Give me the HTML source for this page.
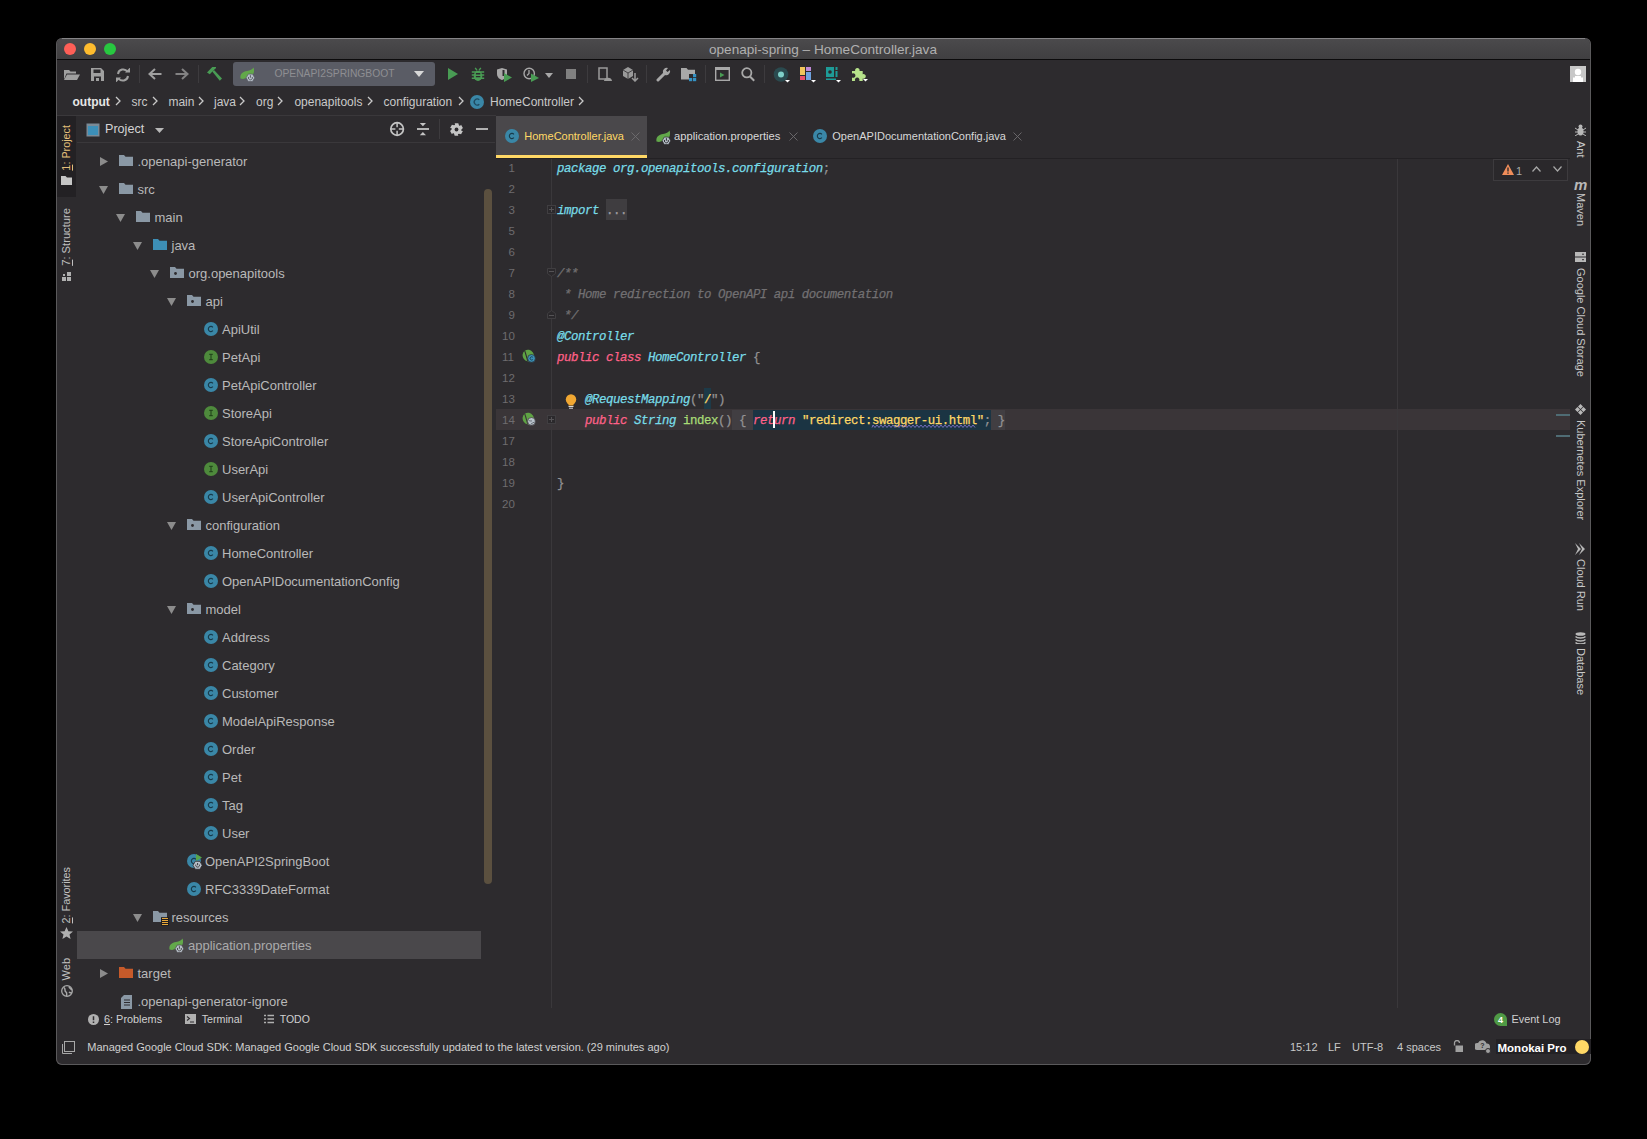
<!DOCTYPE html><html><head><meta charset="utf-8"><style>
html,body{margin:0;padding:0;background:#000;width:1647px;height:1139px;overflow:hidden}
.t{position:absolute;white-space:pre;line-height:1;}
.b{position:absolute;}
#win{position:absolute;left:56px;top:38px;width:1535px;height:1027px;border-radius:6px;background:#2d2b2e;overflow:hidden;box-shadow:0 0 0 1px #5a595b inset}
</style></head><body>
<div id="win"></div>

<div class="b" style="left:57px;top:39px;width:1533px;height:20px;background:linear-gradient(#4b4a4c,#403f41);border-radius:5px 5px 0 0"></div>
<div class="b" style="left:62px;top:38px;width:1523px;height:1px;background:#858486;"></div>
<div class="b" style="left:57px;top:59px;width:1533px;height:1px;background:#0c0b0c;"></div>
<div class="b" style="left:64px;top:43px;width:12px;height:12px;border-radius:50%;background:#fe5f57"></div>
<div class="b" style="left:84px;top:43px;width:12px;height:12px;border-radius:50%;background:#febc2e"></div>
<div class="b" style="left:104px;top:43px;width:12px;height:12px;border-radius:50%;background:#28c840"></div>
<div class="t" style="left:709px;top:43.00px;font-size:13.58px;color:#b0b0b0;font-weight:normal;font-style:normal;font-family:'Liberation Sans', sans-serif;">openapi-spring – HomeController.java</div>
<svg class="b" style="left:64px;top:69px" width="16" height="11" viewBox="0 0 16 11"><path d="M0 1 h5 l1.5 1.5 h5.5 v2 h-9.5 l-2.5 6z" fill="#a0a0a0"/><path d="M3 5.5 h13 l-3 5.5 h-13z" fill="#a0a0a0"/></svg>
<svg class="b" style="left:91px;top:68px" width="13" height="13" viewBox="0 0 13 13"><path d="M0 0h10l3 3v10h-13z M2.5 1.5v3.5h7v-3.5z M3 8.5v4.5h7v-4.5z" fill="#a0a0a0" fill-rule="evenodd"/><rect x="5" y="10" width="3" height="3" fill="#a0a0a0"/></svg>
<svg class="b" style="left:116px;top:68px" width="14" height="14" viewBox="0 0 14 14"><path d="M2 6 A5.2 5.2 0 0 1 11.5 3.8" stroke="#a0a0a0" stroke-width="2" fill="none"/><path d="M12 8 A5.2 5.2 0 0 1 2.5 10.2" stroke="#a0a0a0" stroke-width="2" fill="none"/><path d="M9 4.5h5v-5z" fill="#a0a0a0"/><path d="M5 9.5h-5v5z" fill="#a0a0a0"/></svg>
<div class="b" style="left:139px;top:65px;width:1px;height:18px;background:#3d3b3e;"></div>
<svg class="b" style="left:148px;top:68px" width="14" height="12" viewBox="0 0 14 12"><path d="M13.5 6H2 M7 1L1.5 6 7 11" stroke="#a0a0a0" stroke-width="2" fill="none"/></svg>
<svg class="b" style="left:175px;top:68px" width="14" height="12" viewBox="0 0 14 12"><path d="M0.5 6H12 M7 1l5.5 5-5.5 5" stroke="#a0a0a0" stroke-width="2" fill="none" opacity="0.75"/></svg>
<div class="b" style="left:198px;top:65px;width:1px;height:18px;background:#3d3b3e;"></div>
<svg class="b" style="left:200px;top:60px" width="24" height="24" viewBox="0 0 24 24"><path d="M7 12.5 L12.3 7 L15.9 7 L16.1 7.9 L13.6 10.2 L9.8 14.2z" fill="#499c54"/><path d="M12.3 11.5 L14 10 L22 18.5 L19.8 20.8z" fill="#499c54"/></svg>
<div class="b" style="left:233px;top:62px;width:202px;height:24px;background:#5a5c65;border-radius:3px"></div>
<svg class="b" style="left:239px;top:67.0px" width="16" height="16" viewBox="0 0 16 16"><path d="M1.5 11.5 C0.5 7 4 4.5 8 4 C11 3.6 13.5 2.5 14.5 0.5 C15.5 3 15.5 7 12 9.5 L4 12z" fill="#62a84a"/><polygon points="15.70,10.80 13.55,14.52 9.25,14.52 7.10,10.80 9.25,7.08 13.55,7.08" fill="#b6bfc8" stroke="#5a5c65" stroke-width="0.7"/><path d="M9.6 10 A2 2 0 1 0 13.2 10" stroke="#5a5c65" stroke-width="1" fill="none"/><path d="M11.4 8.2v2.5" stroke="#5a5c65" stroke-width="1"/></svg>
<div class="t" style="left:274.4px;top:69.28px;font-size:10.3px;color:#8e8e92;font-weight:normal;font-style:normal;font-family:'Liberation Sans', sans-serif;">OPENAPI2SPRINGBOOT</div>
<svg class="b" style="left:414px;top:71px" width="10" height="6" viewBox="0 0 10 6"><path d="M0 0h10l-5 6z" fill="#d8d8d8"/></svg>
<svg class="b" style="left:448px;top:68px" width="10" height="12" viewBox="0 0 10 12"><path d="M0 0 L10 6 L0 12z" fill="#499c54"/></svg>
<svg class="b" style="left:471px;top:66px" width="14" height="16" viewBox="0 0 14 16"><ellipse cx="7" cy="9.9" rx="4.3" ry="5.1" fill="#499c54"/><path d="M0.8 6h12.4M0.8 8.9h12.4M0.8 12.3h12.4" stroke="#499c54" stroke-width="1.5"/><path d="M4.2 1.8l1.8 2.6M9.8 1.8l-1.8 2.6" stroke="#499c54" stroke-width="1.4"/><path d="M4.9 7.7h4.4M4.9 10.6h4.4" stroke="#2d2b2e" stroke-width="1.4"/></svg>
<svg class="b" style="left:497px;top:68px" width="15" height="14" viewBox="0 0 15 14"><path d="M0 1.5 L5 0 L10 1.5 V6 C10 9.5 7 11.5 5 12 C3 11.5 0 9.5 0 6z" fill="#a8a8a8"/><path d="M5.5 2 h2 v6 h-2z" fill="#2d2b2e"/><path d="M7 5 L15 9.5 L7 14z" fill="#499c54"/></svg>
<svg class="b" style="left:523px;top:67px" width="16" height="15" viewBox="0 0 16 15"><circle cx="6.2" cy="6.5" r="5.2" stroke="#a8a8a8" stroke-width="1.4" fill="none"/><path d="M6 3v3.5l-2 2" stroke="#a8a8a8" stroke-width="1.3" fill="none"/><path d="M8 6.5 L16 11 L8 15z" fill="#499c54"/></svg>
<svg class="b" style="left:545px;top:73px" width="8" height="5" viewBox="0 0 8 5"><path d="M0 0h8l-4 5z" fill="#a8a8a8"/></svg>
<div class="b" style="left:566px;top:69px;width:10px;height:10px;background:#808080;"></div>
<div class="b" style="left:587px;top:65px;width:1px;height:18px;background:#3d3b3e;"></div>
<svg class="b" style="left:598px;top:67px" width="14" height="15" viewBox="0 0 14 15"><path d="M1 1h8v11h-8z" stroke="#9a9a9a" stroke-width="1.5" fill="none"/><path d="M6 14 C6 9.5 14 9.5 14 14z" fill="#9a9a9a"/></svg>
<svg class="b" style="left:623px;top:67px" width="16" height="15" viewBox="0 0 16 15"><path d="M0 3l5-3 5 3v6l-5 3-5-3z" fill="#9a9a9a"/><path d="M0 3l5 3 5-3M5 6v6" stroke="#2d2b2e" stroke-width="0.8" fill="none"/><path d="M12 6v8M9 11l3 3 3-3" stroke="#9a9a9a" stroke-width="1.5" fill="none"/></svg>
<div class="b" style="left:646px;top:65px;width:1px;height:18px;background:#3d3b3e;"></div>
<svg class="b" style="left:656px;top:67px" width="15" height="15" viewBox="0 0 15 15"><path d="M2 13 L8 7" stroke="#a8a8a8" stroke-width="3" stroke-linecap="round"/><path d="M7 6 A4 4 0 0 1 12 1 L10 3.5 L11.5 5 L14 3 A4 4 0 0 1 9 8z" fill="#a8a8a8"/></svg>
<svg class="b" style="left:681px;top:67px" width="16" height="15" viewBox="0 0 16 15"><path d="M0 1h5.5l1.5 1.8h7v4.2h-6v5.5h-8z" fill="#a8a8a8"/><rect x="12" y="7" width="3.2" height="3.2" fill="#3592c4"/><rect x="8" y="11" width="3.2" height="3.2" fill="#3592c4"/><rect x="12" y="11" width="3.2" height="3.2" fill="#3592c4"/></svg>
<div class="b" style="left:705px;top:65px;width:1px;height:18px;background:#3d3b3e;"></div>
<svg class="b" style="left:715px;top:67px" width="15" height="14" viewBox="0 0 15 14"><rect x="0.7" y="0.7" width="13.6" height="12.6" stroke="#a8a8a8" stroke-width="1.4" fill="none"/><rect x="0.7" y="0.7" width="13.6" height="2.3" fill="#a8a8a8"/><path d="M5 5.5 L9.5 8 L5 10.5z" fill="#499c54"/></svg>
<svg class="b" style="left:741px;top:67px" width="14" height="15" viewBox="0 0 14 15"><circle cx="5.8" cy="5.8" r="4.6" stroke="#a8a8a8" stroke-width="1.8" fill="none"/><path d="M9 9.5 L13.2 13.8" stroke="#a8a8a8" stroke-width="2"/></svg>
<div class="b" style="left:764px;top:65px;width:1px;height:18px;background:#3d3b3e;"></div>
<svg class="b" style="left:773px;top:67px" width="18" height="16" viewBox="0 0 18 16"><circle cx="8" cy="7.5" r="7.3" fill="#2a4a4f"/><circle cx="8" cy="7.5" r="3" fill="#7fd0c9"/><path d="M12 13h5l-2.5 2.5z" fill="#fff"/></svg>
<svg class="b" style="left:800px;top:67px" width="17" height="16" viewBox="0 0 17 16"><rect x="0" y="0" width="5" height="8" fill="#f1c55c"/><rect x="6" y="0" width="5" height="4" fill="#c08ad8"/><rect x="0" y="9" width="5" height="4" fill="#e84f6b"/><rect x="6" y="5" width="5" height="8" fill="#6fa3e0"/><path d="M11 13h5l-2.5 2.5z" fill="#fff"/></svg>
<svg class="b" style="left:826px;top:67px" width="17" height="16" viewBox="0 0 17 16"><rect x="0" y="0" width="8" height="10" fill="#1e9c98"/><circle cx="4" cy="5" r="1.8" fill="#2d2b2e"/><rect x="9.5" y="0" width="2" height="3" fill="#1e9c98"/><rect x="9.5" y="4" width="2" height="6" fill="#1e9c98"/><rect x="0" y="11.5" width="10" height="1.5" fill="#1e9c98"/><path d="M10 13h5l-2.5 2.5z" fill="#fff"/></svg>
<svg class="b" style="left:851px;top:66px" width="18" height="17" viewBox="0 0 18 17"><path d="M1 5h3.2a2.3 2.3 0 1 1 4.3 0h3.2v3.2a2.3 2.3 0 1 1 0 4.3v2.5h-3.5a2.3 2.3 0 1 0-4 0h-3.2v-3.5a2.3 2.3 0 1 0 0-4z" fill="#b6e28a"/><path d="M12 13h5l-2.5 2.5z" fill="#fff"/></svg>
<div class="b" style="left:1570px;top:66px;width:16px;height:16px;background:#c8c8c8;"></div>
<svg class="b" style="left:1570px;top:66px" width="16" height="16" viewBox="0 0 16 16"><circle cx="8" cy="6" r="3.2" fill="#fff"/><path d="M3 16 V11.5 H5 V10 H11 V11.5 H13 V16z" fill="#fff"/></svg>
<div class="t" style="left:72.5px;top:95.84px;font-size:12px;color:#e6e6e6;font-weight:bold;font-style:normal;font-family:'Liberation Sans', sans-serif;">output</div>
<svg class="b" style="left:115px;top:96px" width="6" height="10" viewBox="0 0 6 10"><path d="M1 1 L5 5 L1 9" stroke="#c9c9c9" stroke-width="1.3" fill="none"/></svg>
<div class="t" style="left:131.4px;top:95.84px;font-size:12px;color:#c9c9c9;font-weight:normal;font-style:normal;font-family:'Liberation Sans', sans-serif;">src</div>
<svg class="b" style="left:152px;top:96px" width="6" height="10" viewBox="0 0 6 10"><path d="M1 1 L5 5 L1 9" stroke="#c9c9c9" stroke-width="1.3" fill="none"/></svg>
<div class="t" style="left:168.4px;top:95.84px;font-size:12px;color:#c9c9c9;font-weight:normal;font-style:normal;font-family:'Liberation Sans', sans-serif;">main</div>
<svg class="b" style="left:198px;top:96px" width="6" height="10" viewBox="0 0 6 10"><path d="M1 1 L5 5 L1 9" stroke="#c9c9c9" stroke-width="1.3" fill="none"/></svg>
<div class="t" style="left:214px;top:95.84px;font-size:12px;color:#c9c9c9;font-weight:normal;font-style:normal;font-family:'Liberation Sans', sans-serif;">java</div>
<svg class="b" style="left:239px;top:96px" width="6" height="10" viewBox="0 0 6 10"><path d="M1 1 L5 5 L1 9" stroke="#c9c9c9" stroke-width="1.3" fill="none"/></svg>
<div class="t" style="left:256px;top:95.84px;font-size:12px;color:#c9c9c9;font-weight:normal;font-style:normal;font-family:'Liberation Sans', sans-serif;">org</div>
<svg class="b" style="left:277px;top:96px" width="6" height="10" viewBox="0 0 6 10"><path d="M1 1 L5 5 L1 9" stroke="#c9c9c9" stroke-width="1.3" fill="none"/></svg>
<div class="t" style="left:294.4px;top:95.84px;font-size:12px;color:#c9c9c9;font-weight:normal;font-style:normal;font-family:'Liberation Sans', sans-serif;">openapitools</div>
<svg class="b" style="left:367px;top:96px" width="6" height="10" viewBox="0 0 6 10"><path d="M1 1 L5 5 L1 9" stroke="#c9c9c9" stroke-width="1.3" fill="none"/></svg>
<div class="t" style="left:383.5px;top:95.84px;font-size:12px;color:#c9c9c9;font-weight:normal;font-style:normal;font-family:'Liberation Sans', sans-serif;">configuration</div>
<svg class="b" style="left:458px;top:96px" width="6" height="10" viewBox="0 0 6 10"><path d="M1 1 L5 5 L1 9" stroke="#c9c9c9" stroke-width="1.3" fill="none"/></svg>
<div class="b" style="left:470px;top:95px;width:14px;height:14px;border-radius:50%;background:#3a87a7"></div>
<svg class="b" style="left:470px;top:95px" width="14" height="14" viewBox="0 0 14 14"><path d="M9.3 4.8 A3 3 0 1 0 9.3 9.2" stroke="#1f4a60" stroke-width="1.3" fill="none"/></svg>
<div class="t" style="left:490px;top:95.84px;font-size:12px;color:#c9c9c9;font-weight:normal;font-style:normal;font-family:'Liberation Sans', sans-serif;">HomeController</div>
<svg class="b" style="left:578px;top:96px" width="6" height="10" viewBox="0 0 6 10"><path d="M1 1 L5 5 L1 9" stroke="#c9c9c9" stroke-width="1.3" fill="none"/></svg>
<div class="b" style="left:57px;top:115px;width:439px;height:1px;background:#3a383b;"></div>
<div class="b" style="left:57px;top:116px;width:19px;height:81px;background:#232124;"></div>
<div class="t" style="left:61px;top:125px;font-size:10.8px;line-height:10.8px;color:#e5c07b;font-family:'Liberation Sans', sans-serif;writing-mode:vertical-rl;transform:rotate(180deg);"><u>1</u>: Project</div>
<svg class="b" style="left:61px;top:176px" width="11" height="9" viewBox="0 0 11 9"><path d="M0 0h4.5l1.5 1.5h5v7.5h-11z" fill="#c6c6c6"/></svg>
<div class="t" style="left:61px;top:208px;font-size:11.2px;line-height:11.2px;color:#c0c0c0;font-family:'Liberation Sans', sans-serif;writing-mode:vertical-rl;transform:rotate(180deg);"><u>7</u>: Structure</div>
<svg class="b" style="left:62px;top:272px" width="10" height="10" viewBox="0 0 10 10"><rect x="0" y="5" width="4" height="4" fill="#b0b0b0"/><rect x="5" y="5" width="4" height="4" fill="#b0b0b0"/><rect x="5" y="0" width="4" height="4" fill="#b0b0b0"/><rect x="1" y="2" width="2" height="2" fill="#b0b0b0"/></svg>
<div class="t" style="left:61px;top:866.5px;font-size:10.8px;line-height:10.8px;color:#c0c0c0;font-family:'Liberation Sans', sans-serif;writing-mode:vertical-rl;transform:rotate(180deg);"><u>2</u>: Favorites</div>
<svg class="b" style="left:60px;top:927px" width="13" height="12" viewBox="0 0 13 12"><path d="M6.5 0 L8.4 4.2 L13 4.6 L9.5 7.6 L10.6 12 L6.5 9.6 L2.4 12 L3.5 7.6 L0 4.6 L4.6 4.2z" fill="#b0b0b0"/></svg>
<div class="t" style="left:61px;top:958px;font-size:11px;line-height:11px;color:#c0c0c0;font-family:'Liberation Sans', sans-serif;writing-mode:vertical-rl;transform:rotate(180deg);">Web</div>
<svg class="b" style="left:61px;top:985px" width="12" height="12" viewBox="0 0 12 12"><circle cx="6" cy="6" r="5.3" stroke="#a8a8a8" stroke-width="1.3" fill="none"/><path d="M3 2.5 C5 4 3 6 5 7 C6.5 8 5 10 6 11 M8 1.5 C8 3 10 4 11 5 M8 7 C9 8 10 8 11 8" stroke="#a8a8a8" stroke-width="1.5" fill="none"/></svg>
<svg class="b" style="left:86px;top:123px" width="14" height="14" viewBox="0 0 14 14"><rect x="0.5" y="0.5" width="13" height="13" fill="#7a8a96"/><rect x="2" y="3" width="10" height="9" fill="#3c8fb8"/></svg>
<div class="t" style="left:105px;top:123.33px;font-size:12.6px;color:#d4d4d4;font-weight:normal;font-style:normal;font-family:'Liberation Sans', sans-serif;">Project</div>
<svg class="b" style="left:154.5px;top:128px" width="9" height="5" viewBox="0 0 9 5"><path d="M0 0h9l-4.5 5z" fill="#b8b8b8"/></svg>
<svg class="b" style="left:389px;top:121px" width="16" height="16" viewBox="0 0 16 16"><circle cx="8.1" cy="8" r="6.3" stroke="#c4c4c4" stroke-width="1.7" fill="none"/><path d="M8.1 2v4.3M8.1 9.7V14M2 8h4.4M9.8 8h4.4" stroke="#c4c4c4" stroke-width="1.5"/></svg>
<svg class="b" style="left:416px;top:121px" width="14" height="16" viewBox="0 0 14 16"><path d="M1 8h12" stroke="#c4c4c4" stroke-width="1.8"/><path d="M3.8 2h6.2l-3.1 3.2z M3.8 14.3h6.2l-3.1-3.2z" fill="#c4c4c4"/></svg>
<div class="b" style="left:439px;top:119px;width:1px;height:20px;background:#3d3b3e;"></div>
<svg class="b" style="left:448.5px;top:121.5px" width="15" height="15" viewBox="0 0 15 15"><polygon points="5.68,1.16 9.32,1.16 9.95,3.26 10.90,3.98 12.08,2.75 13.90,5.90 12.40,7.50 12.25,8.69 13.90,9.10 12.08,12.25 9.95,11.74 8.85,12.21 9.32,13.84 5.68,13.84 5.05,11.74 4.10,11.02 2.92,12.25 1.10,9.10 2.60,7.50 2.75,6.31 1.10,5.90 2.92,2.75 5.05,3.26 6.15,2.79" fill="#c4c4c4"/><circle cx="7.5" cy="7.5" r="3.6" fill="#c4c4c4"/><circle cx="7.5" cy="7.5" r="1.9" fill="#2d2b2e"/></svg>
<div class="b" style="left:476px;top:128px;width:12px;height:2px;background:#b0b0b0;"></div>
<div class="b" style="left:77px;top:142px;width:418px;height:1px;background:#3a383b;"></div>
<div class="b" style="left:77px;top:931px;width:404px;height:28px;background:#4a484b;"></div>
<svg class="b" style="left:100px;top:157.0px" width="8" height="9" viewBox="0 0 8 9"><path d="M0 0 L8 4.5 L0 9z" fill="#8c8c8c"/></svg>
<svg class="b" style="left:119px;top:155.0px" width="16" height="15" viewBox="0 0 16 15"><path d="M0 0h5l1.5 1.8h7.5v9.2h-14z" fill="#8a98a5"/></svg>
<div class="t" style="left:137.5px;top:155.00px;font-size:13px;color:#b9b9b9;font-weight:normal;font-style:normal;font-family:'Liberation Sans', sans-serif;">.openapi-generator</div>
<svg class="b" style="left:99px;top:186.0px" width="9" height="8" viewBox="0 0 9 8"><path d="M0 0 H9 L4.5 8z" fill="#8c8c8c"/></svg>
<svg class="b" style="left:119px;top:183.0px" width="16" height="15" viewBox="0 0 16 15"><path d="M0 0h5l1.5 1.8h7.5v9.2h-14z" fill="#8a98a5"/></svg>
<div class="t" style="left:137.5px;top:183.00px;font-size:13px;color:#b9b9b9;font-weight:normal;font-style:normal;font-family:'Liberation Sans', sans-serif;">src</div>
<svg class="b" style="left:116px;top:214.0px" width="9" height="8" viewBox="0 0 9 8"><path d="M0 0 H9 L4.5 8z" fill="#8c8c8c"/></svg>
<svg class="b" style="left:136px;top:211.0px" width="16" height="15" viewBox="0 0 16 15"><path d="M0 0h5l1.5 1.8h7.5v9.2h-14z" fill="#8a98a5"/></svg>
<div class="t" style="left:154.5px;top:211.00px;font-size:13px;color:#b9b9b9;font-weight:normal;font-style:normal;font-family:'Liberation Sans', sans-serif;">main</div>
<svg class="b" style="left:133px;top:242.0px" width="9" height="8" viewBox="0 0 9 8"><path d="M0 0 H9 L4.5 8z" fill="#8c8c8c"/></svg>
<svg class="b" style="left:153px;top:239.0px" width="16" height="15" viewBox="0 0 16 15"><path d="M0 0h5l1.5 1.8h7.5v9.2h-14z" fill="#3d8fb6"/></svg>
<div class="t" style="left:171.5px;top:239.00px;font-size:13px;color:#b9b9b9;font-weight:normal;font-style:normal;font-family:'Liberation Sans', sans-serif;">java</div>
<svg class="b" style="left:150px;top:270.0px" width="9" height="8" viewBox="0 0 9 8"><path d="M0 0 H9 L4.5 8z" fill="#8c8c8c"/></svg>
<svg class="b" style="left:170px;top:267.0px" width="16" height="15" viewBox="0 0 16 15"><path d="M0 0h5l1.5 1.8h7.5v9.2h-14z" fill="#8a98a5"/><circle cx="5.5" cy="6.5" r="1.4" fill="#2d2b2e"/></svg>
<div class="t" style="left:188.5px;top:267.00px;font-size:13px;color:#b9b9b9;font-weight:normal;font-style:normal;font-family:'Liberation Sans', sans-serif;">org.openapitools</div>
<svg class="b" style="left:167px;top:298.0px" width="9" height="8" viewBox="0 0 9 8"><path d="M0 0 H9 L4.5 8z" fill="#8c8c8c"/></svg>
<svg class="b" style="left:187px;top:295.0px" width="16" height="15" viewBox="0 0 16 15"><path d="M0 0h5l1.5 1.8h7.5v9.2h-14z" fill="#8a98a5"/><circle cx="5.5" cy="6.5" r="1.4" fill="#2d2b2e"/></svg>
<div class="t" style="left:205.5px;top:295.00px;font-size:13px;color:#b9b9b9;font-weight:normal;font-style:normal;font-family:'Liberation Sans', sans-serif;">api</div>
<div class="b" style="left:204px;top:321.7px;width:14px;height:14px;border-radius:50%;background:#3a87a7"></div>
<svg class="b" style="left:204px;top:321.7px" width="14" height="14" viewBox="0 0 14 14"><path d="M8.9 5.3 A2.6 2.6 0 1 0 8.9 8.7" stroke="#173a4a" stroke-width="1.1" fill="none"/></svg>
<div class="t" style="left:222px;top:323.00px;font-size:13px;color:#b9b9b9;font-weight:normal;font-style:normal;font-family:'Liberation Sans', sans-serif;">ApiUtil</div>
<div class="b" style="left:204px;top:349.7px;width:14px;height:14px;border-radius:50%;background:#4e8a3c"></div>
<svg class="b" style="left:204px;top:349.7px" width="14" height="14" viewBox="0 0 14 14"><path d="M5.2 4.3h3.6M7 4.3v5.4M5.2 9.7h3.6" stroke="#1d3d17" stroke-width="1" fill="none"/></svg>
<div class="t" style="left:222px;top:351.00px;font-size:13px;color:#b9b9b9;font-weight:normal;font-style:normal;font-family:'Liberation Sans', sans-serif;">PetApi</div>
<div class="b" style="left:204px;top:377.7px;width:14px;height:14px;border-radius:50%;background:#3a87a7"></div>
<svg class="b" style="left:204px;top:377.7px" width="14" height="14" viewBox="0 0 14 14"><path d="M8.9 5.3 A2.6 2.6 0 1 0 8.9 8.7" stroke="#173a4a" stroke-width="1.1" fill="none"/></svg>
<div class="t" style="left:222px;top:379.00px;font-size:13px;color:#b9b9b9;font-weight:normal;font-style:normal;font-family:'Liberation Sans', sans-serif;">PetApiController</div>
<div class="b" style="left:204px;top:405.7px;width:14px;height:14px;border-radius:50%;background:#4e8a3c"></div>
<svg class="b" style="left:204px;top:405.7px" width="14" height="14" viewBox="0 0 14 14"><path d="M5.2 4.3h3.6M7 4.3v5.4M5.2 9.7h3.6" stroke="#1d3d17" stroke-width="1" fill="none"/></svg>
<div class="t" style="left:222px;top:407.00px;font-size:13px;color:#b9b9b9;font-weight:normal;font-style:normal;font-family:'Liberation Sans', sans-serif;">StoreApi</div>
<div class="b" style="left:204px;top:433.7px;width:14px;height:14px;border-radius:50%;background:#3a87a7"></div>
<svg class="b" style="left:204px;top:433.7px" width="14" height="14" viewBox="0 0 14 14"><path d="M8.9 5.3 A2.6 2.6 0 1 0 8.9 8.7" stroke="#173a4a" stroke-width="1.1" fill="none"/></svg>
<div class="t" style="left:222px;top:435.00px;font-size:13px;color:#b9b9b9;font-weight:normal;font-style:normal;font-family:'Liberation Sans', sans-serif;">StoreApiController</div>
<div class="b" style="left:204px;top:461.7px;width:14px;height:14px;border-radius:50%;background:#4e8a3c"></div>
<svg class="b" style="left:204px;top:461.7px" width="14" height="14" viewBox="0 0 14 14"><path d="M5.2 4.3h3.6M7 4.3v5.4M5.2 9.7h3.6" stroke="#1d3d17" stroke-width="1" fill="none"/></svg>
<div class="t" style="left:222px;top:463.00px;font-size:13px;color:#b9b9b9;font-weight:normal;font-style:normal;font-family:'Liberation Sans', sans-serif;">UserApi</div>
<div class="b" style="left:204px;top:489.7px;width:14px;height:14px;border-radius:50%;background:#3a87a7"></div>
<svg class="b" style="left:204px;top:489.7px" width="14" height="14" viewBox="0 0 14 14"><path d="M8.9 5.3 A2.6 2.6 0 1 0 8.9 8.7" stroke="#173a4a" stroke-width="1.1" fill="none"/></svg>
<div class="t" style="left:222px;top:491.00px;font-size:13px;color:#b9b9b9;font-weight:normal;font-style:normal;font-family:'Liberation Sans', sans-serif;">UserApiController</div>
<svg class="b" style="left:167px;top:522.0px" width="9" height="8" viewBox="0 0 9 8"><path d="M0 0 H9 L4.5 8z" fill="#8c8c8c"/></svg>
<svg class="b" style="left:187px;top:519.0px" width="16" height="15" viewBox="0 0 16 15"><path d="M0 0h5l1.5 1.8h7.5v9.2h-14z" fill="#8a98a5"/><circle cx="5.5" cy="6.5" r="1.4" fill="#2d2b2e"/></svg>
<div class="t" style="left:205.5px;top:519.00px;font-size:13px;color:#b9b9b9;font-weight:normal;font-style:normal;font-family:'Liberation Sans', sans-serif;">configuration</div>
<div class="b" style="left:204px;top:545.7px;width:14px;height:14px;border-radius:50%;background:#3a87a7"></div>
<svg class="b" style="left:204px;top:545.7px" width="14" height="14" viewBox="0 0 14 14"><path d="M8.9 5.3 A2.6 2.6 0 1 0 8.9 8.7" stroke="#173a4a" stroke-width="1.1" fill="none"/></svg>
<div class="t" style="left:222px;top:547.00px;font-size:13px;color:#b9b9b9;font-weight:normal;font-style:normal;font-family:'Liberation Sans', sans-serif;">HomeController</div>
<div class="b" style="left:204px;top:573.7px;width:14px;height:14px;border-radius:50%;background:#3a87a7"></div>
<svg class="b" style="left:204px;top:573.7px" width="14" height="14" viewBox="0 0 14 14"><path d="M8.9 5.3 A2.6 2.6 0 1 0 8.9 8.7" stroke="#173a4a" stroke-width="1.1" fill="none"/></svg>
<div class="t" style="left:222px;top:575.00px;font-size:13px;color:#b9b9b9;font-weight:normal;font-style:normal;font-family:'Liberation Sans', sans-serif;">OpenAPIDocumentationConfig</div>
<svg class="b" style="left:167px;top:606.0px" width="9" height="8" viewBox="0 0 9 8"><path d="M0 0 H9 L4.5 8z" fill="#8c8c8c"/></svg>
<svg class="b" style="left:187px;top:603.0px" width="16" height="15" viewBox="0 0 16 15"><path d="M0 0h5l1.5 1.8h7.5v9.2h-14z" fill="#8a98a5"/><circle cx="5.5" cy="6.5" r="1.4" fill="#2d2b2e"/></svg>
<div class="t" style="left:205.5px;top:603.00px;font-size:13px;color:#b9b9b9;font-weight:normal;font-style:normal;font-family:'Liberation Sans', sans-serif;">model</div>
<div class="b" style="left:204px;top:629.7px;width:14px;height:14px;border-radius:50%;background:#3a87a7"></div>
<svg class="b" style="left:204px;top:629.7px" width="14" height="14" viewBox="0 0 14 14"><path d="M8.9 5.3 A2.6 2.6 0 1 0 8.9 8.7" stroke="#173a4a" stroke-width="1.1" fill="none"/></svg>
<div class="t" style="left:222px;top:631.00px;font-size:13px;color:#b9b9b9;font-weight:normal;font-style:normal;font-family:'Liberation Sans', sans-serif;">Address</div>
<div class="b" style="left:204px;top:657.7px;width:14px;height:14px;border-radius:50%;background:#3a87a7"></div>
<svg class="b" style="left:204px;top:657.7px" width="14" height="14" viewBox="0 0 14 14"><path d="M8.9 5.3 A2.6 2.6 0 1 0 8.9 8.7" stroke="#173a4a" stroke-width="1.1" fill="none"/></svg>
<div class="t" style="left:222px;top:659.00px;font-size:13px;color:#b9b9b9;font-weight:normal;font-style:normal;font-family:'Liberation Sans', sans-serif;">Category</div>
<div class="b" style="left:204px;top:685.7px;width:14px;height:14px;border-radius:50%;background:#3a87a7"></div>
<svg class="b" style="left:204px;top:685.7px" width="14" height="14" viewBox="0 0 14 14"><path d="M8.9 5.3 A2.6 2.6 0 1 0 8.9 8.7" stroke="#173a4a" stroke-width="1.1" fill="none"/></svg>
<div class="t" style="left:222px;top:687.00px;font-size:13px;color:#b9b9b9;font-weight:normal;font-style:normal;font-family:'Liberation Sans', sans-serif;">Customer</div>
<div class="b" style="left:204px;top:713.7px;width:14px;height:14px;border-radius:50%;background:#3a87a7"></div>
<svg class="b" style="left:204px;top:713.7px" width="14" height="14" viewBox="0 0 14 14"><path d="M8.9 5.3 A2.6 2.6 0 1 0 8.9 8.7" stroke="#173a4a" stroke-width="1.1" fill="none"/></svg>
<div class="t" style="left:222px;top:715.00px;font-size:13px;color:#b9b9b9;font-weight:normal;font-style:normal;font-family:'Liberation Sans', sans-serif;">ModelApiResponse</div>
<div class="b" style="left:204px;top:741.7px;width:14px;height:14px;border-radius:50%;background:#3a87a7"></div>
<svg class="b" style="left:204px;top:741.7px" width="14" height="14" viewBox="0 0 14 14"><path d="M8.9 5.3 A2.6 2.6 0 1 0 8.9 8.7" stroke="#173a4a" stroke-width="1.1" fill="none"/></svg>
<div class="t" style="left:222px;top:743.00px;font-size:13px;color:#b9b9b9;font-weight:normal;font-style:normal;font-family:'Liberation Sans', sans-serif;">Order</div>
<div class="b" style="left:204px;top:769.7px;width:14px;height:14px;border-radius:50%;background:#3a87a7"></div>
<svg class="b" style="left:204px;top:769.7px" width="14" height="14" viewBox="0 0 14 14"><path d="M8.9 5.3 A2.6 2.6 0 1 0 8.9 8.7" stroke="#173a4a" stroke-width="1.1" fill="none"/></svg>
<div class="t" style="left:222px;top:771.00px;font-size:13px;color:#b9b9b9;font-weight:normal;font-style:normal;font-family:'Liberation Sans', sans-serif;">Pet</div>
<div class="b" style="left:204px;top:797.7px;width:14px;height:14px;border-radius:50%;background:#3a87a7"></div>
<svg class="b" style="left:204px;top:797.7px" width="14" height="14" viewBox="0 0 14 14"><path d="M8.9 5.3 A2.6 2.6 0 1 0 8.9 8.7" stroke="#173a4a" stroke-width="1.1" fill="none"/></svg>
<div class="t" style="left:222px;top:799.00px;font-size:13px;color:#b9b9b9;font-weight:normal;font-style:normal;font-family:'Liberation Sans', sans-serif;">Tag</div>
<div class="b" style="left:204px;top:825.7px;width:14px;height:14px;border-radius:50%;background:#3a87a7"></div>
<svg class="b" style="left:204px;top:825.7px" width="14" height="14" viewBox="0 0 14 14"><path d="M8.9 5.3 A2.6 2.6 0 1 0 8.9 8.7" stroke="#173a4a" stroke-width="1.1" fill="none"/></svg>
<div class="t" style="left:222px;top:827.00px;font-size:13px;color:#b9b9b9;font-weight:normal;font-style:normal;font-family:'Liberation Sans', sans-serif;">User</div>
<div class="b" style="left:187px;top:853.7px;width:14px;height:14px;border-radius:50%;background:#3a87a7"></div>
<svg class="b" style="left:187px;top:853.7px" width="14" height="14" viewBox="0 0 14 14"><path d="M8.9 5.3 A2.6 2.6 0 1 0 8.9 8.7" stroke="#173a4a" stroke-width="1.1" fill="none"/></svg>
<svg class="b" style="left:191px;top:853.5px" width="13" height="17" viewBox="0 0 13 17"><path d="M5 0 L11 3.5 L5 7z" fill="#57a64a"/><polygon points="11.20,11.30 8.90,15.28 4.30,15.28 2.00,11.30 4.30,7.32 8.90,7.32" fill="#b6bfc8" stroke="#2d2b2e" stroke-width="0.8"/><path d="M4.8 10.6 A1.9 1.9 0 1 0 8.4 10.6" stroke="#2d2b2e" stroke-width="0.9" fill="none"/><path d="M6.6 9v2.2" stroke="#2d2b2e" stroke-width="0.9"/></svg>
<div class="t" style="left:205px;top:855.00px;font-size:13px;color:#b9b9b9;font-weight:normal;font-style:normal;font-family:'Liberation Sans', sans-serif;">OpenAPI2SpringBoot</div>
<div class="b" style="left:187px;top:881.7px;width:14px;height:14px;border-radius:50%;background:#3a87a7"></div>
<svg class="b" style="left:187px;top:881.7px" width="14" height="14" viewBox="0 0 14 14"><path d="M8.9 5.3 A2.6 2.6 0 1 0 8.9 8.7" stroke="#173a4a" stroke-width="1.1" fill="none"/></svg>
<div class="t" style="left:205px;top:883.00px;font-size:13px;color:#b9b9b9;font-weight:normal;font-style:normal;font-family:'Liberation Sans', sans-serif;">RFC3339DateFormat</div>
<svg class="b" style="left:133px;top:914.0px" width="9" height="8" viewBox="0 0 9 8"><path d="M0 0 H9 L4.5 8z" fill="#8c8c8c"/></svg>
<svg class="b" style="left:153px;top:911.0px" width="16" height="15" viewBox="0 0 16 15"><path d="M0 0h5l1.5 1.8h7.5v9.2h-14z" fill="#8a98a5"/><rect x="8" y="6.2" width="8" height="8.6" fill="#1f1d20"/><path d="M9 7.5h6M9 9.5h6M9 11.5h6M9 13.5h6" stroke="#e8a93a" stroke-width="1.2"/></svg>
<div class="t" style="left:171.5px;top:911.00px;font-size:13px;color:#b9b9b9;font-weight:normal;font-style:normal;font-family:'Liberation Sans', sans-serif;">resources</div>
<svg class="b" style="left:168px;top:938.0px" width="16" height="16" viewBox="0 0 16 16"><path d="M1.5 11.5 C0.5 7 4 4.5 8 4 C11 3.6 13.5 2.5 14.5 0.5 C15.5 3 15.5 7 12 9.5 L4 12z" fill="#62a84a"/><polygon points="15.70,10.80 13.55,14.52 9.25,14.52 7.10,10.80 9.25,7.08 13.55,7.08" fill="#b6bfc8" stroke="#4a484b" stroke-width="0.7"/><path d="M9.6 10 A2 2 0 1 0 13.2 10" stroke="#4a484b" stroke-width="1" fill="none"/><path d="M11.4 8.2v2.5" stroke="#4a484b" stroke-width="1"/></svg>
<div class="t" style="left:188px;top:939.00px;font-size:13px;color:#ababab;font-weight:normal;font-style:normal;font-family:'Liberation Sans', sans-serif;">application.properties</div>
<svg class="b" style="left:100px;top:969.0px" width="8" height="9" viewBox="0 0 8 9"><path d="M0 0 L8 4.5 L0 9z" fill="#8c8c8c"/></svg>
<svg class="b" style="left:119px;top:967.0px" width="16" height="15" viewBox="0 0 16 15"><path d="M0 0h5l1.5 1.8h7.5v9.2h-14z" fill="#c65a2a"/></svg>
<div class="t" style="left:137.5px;top:967.00px;font-size:13px;color:#b9b9b9;font-weight:normal;font-style:normal;font-family:'Liberation Sans', sans-serif;">target</div>
<svg class="b" style="left:121px;top:994.5px" width="11" height="14" viewBox="0 0 11 14"><path d="M3 0h8v14h-11v-11z" fill="#8a98a5"/><path d="M3 5h6M3 7.5h6M3 10h6" stroke="#2d2b2e" stroke-width="1"/></svg>
<div class="t" style="left:137.5px;top:995.00px;font-size:13px;color:#b9b9b9;font-weight:normal;font-style:normal;font-family:'Liberation Sans', sans-serif;">.openapi-generator-ignore</div>
<div class="b" style="left:484px;top:189px;width:8px;height:695px;background:#5b503f;border-radius:4px"></div>
<div class="b" style="left:496px;top:116px;width:151px;height:39px;background:#4a484b;"></div>
<div class="b" style="left:496px;top:155px;width:151px;height:3px;background:#ffd866;"></div>
<div class="b" style="left:496px;top:158px;width:1074px;height:1px;background:#232124;"></div>
<div class="b" style="left:505px;top:129.0px;width:14px;height:14px;border-radius:50%;background:#3a87a7"></div>
<svg class="b" style="left:505px;top:129.0px" width="14" height="14" viewBox="0 0 14 14"><path d="M8.9 5.3 A2.6 2.6 0 1 0 8.9 8.7" stroke="#173a4a" stroke-width="1.1" fill="none"/></svg>
<div class="t" style="left:524.3px;top:130.99px;font-size:11px;color:#ffd866;font-weight:normal;font-style:normal;font-family:'Liberation Sans', sans-serif;">HomeController.java</div>
<svg class="b" style="left:630.5px;top:131.5px" width="9" height="9" viewBox="0 0 9 9"><path d="M0.5 0.5 L8.5 8.5 M8.5 0.5 L0.5 8.5" stroke="#6f6d70" stroke-width="0.9"/></svg>
<svg class="b" style="left:654.5px;top:129.5px" width="16" height="16" viewBox="0 0 16 16"><path d="M1.5 11.5 C0.5 7 4 4.5 8 4 C11 3.6 13.5 2.5 14.5 0.5 C15.5 3 15.5 7 12 9.5 L4 12z" fill="#62a84a"/><polygon points="15.70,10.80 13.55,14.52 9.25,14.52 7.10,10.80 9.25,7.08 13.55,7.08" fill="#b6bfc8" stroke="#2d2b2e" stroke-width="0.7"/><path d="M9.6 10 A2 2 0 1 0 13.2 10" stroke="#2d2b2e" stroke-width="1" fill="none"/><path d="M11.4 8.2v2.5" stroke="#2d2b2e" stroke-width="1"/></svg>
<div class="t" style="left:674px;top:130.82px;font-size:11.2px;color:#d8d8d8;font-weight:normal;font-style:normal;font-family:'Liberation Sans', sans-serif;">application.properties</div>
<svg class="b" style="left:789px;top:131.5px" width="9" height="9" viewBox="0 0 9 9"><path d="M0.5 0.5 L8.5 8.5 M8.5 0.5 L0.5 8.5" stroke="#6f6d70" stroke-width="0.9"/></svg>
<div class="b" style="left:813px;top:129.0px;width:14px;height:14px;border-radius:50%;background:#3a87a7"></div>
<svg class="b" style="left:813px;top:129.0px" width="14" height="14" viewBox="0 0 14 14"><path d="M8.9 5.3 A2.6 2.6 0 1 0 8.9 8.7" stroke="#173a4a" stroke-width="1.1" fill="none"/></svg>
<div class="t" style="left:832.3px;top:130.99px;font-size:11px;color:#d8d8d8;font-weight:normal;font-style:normal;font-family:'Liberation Sans', sans-serif;">OpenAPIDocumentationConfig.java</div>
<svg class="b" style="left:1012.5px;top:131.5px" width="9" height="9" viewBox="0 0 9 9"><path d="M0.5 0.5 L8.5 8.5 M8.5 0.5 L0.5 8.5" stroke="#6f6d70" stroke-width="0.9"/></svg>
<div class="b" style="left:496px;top:409px;width:1074px;height:21px;background:#3a3538;"></div>
<div class="b" style="left:551px;top:159px;width:1px;height:849px;background:#3a383b;"></div>
<div class="b" style="left:1397px;top:159px;width:1px;height:849px;background:#3a383b;"></div>
<div class="t" style="left:508.4px;top:163.07px;font-size:11.5px;color:#6e6c6f;font-weight:normal;font-style:normal;font-family:'Liberation Sans', sans-serif;">1</div>
<div class="t" style="left:508.4px;top:184.07px;font-size:11.5px;color:#6e6c6f;font-weight:normal;font-style:normal;font-family:'Liberation Sans', sans-serif;">2</div>
<div class="t" style="left:508.4px;top:205.07px;font-size:11.5px;color:#6e6c6f;font-weight:normal;font-style:normal;font-family:'Liberation Sans', sans-serif;">3</div>
<div class="t" style="left:508.4px;top:226.07px;font-size:11.5px;color:#6e6c6f;font-weight:normal;font-style:normal;font-family:'Liberation Sans', sans-serif;">5</div>
<div class="t" style="left:508.4px;top:247.07px;font-size:11.5px;color:#6e6c6f;font-weight:normal;font-style:normal;font-family:'Liberation Sans', sans-serif;">6</div>
<div class="t" style="left:508.4px;top:268.07px;font-size:11.5px;color:#6e6c6f;font-weight:normal;font-style:normal;font-family:'Liberation Sans', sans-serif;">7</div>
<div class="t" style="left:508.4px;top:289.07px;font-size:11.5px;color:#6e6c6f;font-weight:normal;font-style:normal;font-family:'Liberation Sans', sans-serif;">8</div>
<div class="t" style="left:508.4px;top:310.07px;font-size:11.5px;color:#6e6c6f;font-weight:normal;font-style:normal;font-family:'Liberation Sans', sans-serif;">9</div>
<div class="t" style="left:501.99999999999994px;top:331.07px;font-size:11.5px;color:#6e6c6f;font-weight:normal;font-style:normal;font-family:'Liberation Sans', sans-serif;">10</div>
<div class="t" style="left:501.99999999999994px;top:352.07px;font-size:11.5px;color:#6e6c6f;font-weight:normal;font-style:normal;font-family:'Liberation Sans', sans-serif;">11</div>
<div class="t" style="left:501.99999999999994px;top:373.07px;font-size:11.5px;color:#6e6c6f;font-weight:normal;font-style:normal;font-family:'Liberation Sans', sans-serif;">12</div>
<div class="t" style="left:501.99999999999994px;top:394.07px;font-size:11.5px;color:#6e6c6f;font-weight:normal;font-style:normal;font-family:'Liberation Sans', sans-serif;">13</div>
<div class="t" style="left:501.99999999999994px;top:415.07px;font-size:11.5px;color:#6e6c6f;font-weight:normal;font-style:normal;font-family:'Liberation Sans', sans-serif;">14</div>
<div class="t" style="left:501.99999999999994px;top:436.07px;font-size:11.5px;color:#6e6c6f;font-weight:normal;font-style:normal;font-family:'Liberation Sans', sans-serif;">17</div>
<div class="t" style="left:501.99999999999994px;top:457.07px;font-size:11.5px;color:#6e6c6f;font-weight:normal;font-style:normal;font-family:'Liberation Sans', sans-serif;">18</div>
<div class="t" style="left:501.99999999999994px;top:478.07px;font-size:11.5px;color:#6e6c6f;font-weight:normal;font-style:normal;font-family:'Liberation Sans', sans-serif;">19</div>
<div class="t" style="left:501.99999999999994px;top:499.07px;font-size:11.5px;color:#6e6c6f;font-weight:normal;font-style:normal;font-family:'Liberation Sans', sans-serif;">20</div>
<div class="t" style="left:557.0px;top:162.50px;font-size:12.4px;font-family:'Liberation Mono', monospace;letter-spacing:-0.440px;-webkit-text-stroke:0.25px currentColor"><span style="color:#78dce8;font-style:italic">package</span><span style="color:#fcfcfa;font-style:normal"> </span><span style="color:#78dce8;font-style:italic">org.openapitools.configuration</span><span style="color:#939293;font-style:normal">;</span></div>
<div class="b" style="left:606px;top:199px;width:21px;height:21px;background:#3f3d40;"></div>
<div class="t" style="left:557.0px;top:204.50px;font-size:12.4px;font-family:'Liberation Mono', monospace;letter-spacing:-0.440px;-webkit-text-stroke:0.25px currentColor"><span style="color:#78dce8;font-style:italic">import</span><span style="color:#fcfcfa;font-style:normal"> </span><span style="color:#a09ea1;font-style:normal">...</span></div>
<div class="t" style="left:557.0px;top:267.50px;font-size:12.4px;font-family:'Liberation Mono', monospace;letter-spacing:-0.440px;-webkit-text-stroke:0.25px currentColor"><span style="color:#727072;font-style:italic">/**</span></div>
<div class="t" style="left:557.0px;top:288.50px;font-size:12.4px;font-family:'Liberation Mono', monospace;letter-spacing:-0.440px;-webkit-text-stroke:0.25px currentColor"><span style="color:#727072;font-style:italic"> * Home redirection to OpenAPI api documentation</span></div>
<div class="t" style="left:557.0px;top:309.50px;font-size:12.4px;font-family:'Liberation Mono', monospace;letter-spacing:-0.440px;-webkit-text-stroke:0.25px currentColor"><span style="color:#727072;font-style:italic"> */</span></div>
<div class="t" style="left:557.0px;top:330.50px;font-size:12.4px;font-family:'Liberation Mono', monospace;letter-spacing:-0.440px;-webkit-text-stroke:0.25px currentColor"><span style="color:#78dce8;font-style:italic">@Controller</span></div>
<div class="t" style="left:557.0px;top:351.50px;font-size:12.4px;font-family:'Liberation Mono', monospace;letter-spacing:-0.440px;-webkit-text-stroke:0.25px currentColor"><span style="color:#ff6188;font-style:italic">public</span><span style="color:#fcfcfa;font-style:normal"> </span><span style="color:#ff6188;font-style:italic">class</span><span style="color:#fcfcfa;font-style:normal"> </span><span style="color:#78dce8;font-style:italic">HomeController</span><span style="color:#fcfcfa;font-style:normal"> </span><span style="color:#939293;font-style:normal">{</span></div>
<div class="b" style="left:704px;top:388px;width:7px;height:21px;background:#1d3a48;"></div>
<div class="t" style="left:585.0px;top:393.50px;font-size:12.4px;font-family:'Liberation Mono', monospace;letter-spacing:-0.440px;-webkit-text-stroke:0.25px currentColor"><span style="color:#78dce8;font-style:italic">@RequestMapping</span><span style="color:#939293;font-style:normal">("</span><span style="color:#ffd866;font-style:normal">/</span><span style="color:#939293;font-style:normal">")</span></div>
<div class="b" style="left:732px;top:410px;width:21px;height:20px;background:#413e42;"></div>
<div class="b" style="left:753px;top:410px;width:238px;height:20px;background:#1b3443;"></div>
<div class="b" style="left:991px;top:410px;width:14px;height:20px;background:#413e42;"></div>
<div class="t" style="left:585.0px;top:414.50px;font-size:12.4px;font-family:'Liberation Mono', monospace;letter-spacing:-0.440px;-webkit-text-stroke:0.25px currentColor"><span style="color:#ff6188;font-style:italic">public</span><span style="color:#fcfcfa;font-style:normal"> </span><span style="color:#78dce8;font-style:italic">String</span><span style="color:#fcfcfa;font-style:normal"> </span><span style="color:#a9dc76;font-style:normal">index</span><span style="color:#939293;font-style:normal">()</span><span style="color:#fcfcfa;font-style:normal"> </span><span style="color:#939293;font-style:normal">{</span><span style="color:#fcfcfa;font-style:normal"> </span><span style="color:#ff6188;font-style:italic">return</span><span style="color:#fcfcfa;font-style:normal"> </span><span style="color:#ffd866;font-style:normal">"redirect:swagger-ui.html"</span><span style="color:#939293;font-style:normal">;</span><span style="color:#fcfcfa;font-style:normal"> </span><span style="color:#939293;font-style:normal">}</span></div>
<div class="b" style="left:773px;top:411px;width:2px;height:17px;background:#fcfcfa;"></div>
<div class="t" style="left:557.0px;top:477.50px;font-size:12.4px;font-family:'Liberation Mono', monospace;letter-spacing:-0.440px;-webkit-text-stroke:0.25px currentColor"><span style="color:#939293;font-style:normal">}</span></div>
<svg class="b" style="left:521.5px;top:349px" width="14" height="14" viewBox="0 0 14 14"><ellipse cx="6.3" cy="6.6" rx="5.6" ry="6" transform="rotate(-35 6.3 6.6)" fill="#5fa344"/><path d="M2.8 1.8 L5.8 12" stroke="#2d2b2e" stroke-width="1.1"/><circle cx="9.5" cy="9.4" r="3.9" fill="#3a8fb5" stroke="#2d2b2e" stroke-width="0.7"/><path d="M10.8 8.2 A1.6 1.6 0 1 0 10.8 10.6" stroke="#173a4a" stroke-width="0.9" fill="none"/></svg>
<svg class="b" style="left:521.5px;top:412px" width="14" height="14" viewBox="0 0 14 14"><ellipse cx="6.3" cy="6.6" rx="5.6" ry="6" transform="rotate(-35 6.3 6.6)" fill="#5fa344"/><path d="M2.8 1.8 L5.8 12" stroke="#3a3538" stroke-width="1.1"/><circle cx="9.5" cy="9.4" r="3.9" fill="#b9c2cb" stroke="#3a3538" stroke-width="0.7"/><path d="M7 9 C8 8 9 10 10 8.5 M9 12 C10 11 11 11 12.5 10" stroke="#5a6066" stroke-width="0.9" fill="none"/></svg>
<svg class="b" style="left:565px;top:393.5px" width="12" height="16" viewBox="0 0 12 16"><circle cx="6" cy="5.5" r="5.2" fill="#f0a732"/><rect x="3.5" y="9" width="5" height="2.5" fill="#f0a732"/><path d="M3.5 12.5h5M4 14.2h4" stroke="#d8d8d8" stroke-width="1"/></svg>
<svg class="b" style="left:547px;top:205px" width="9" height="9" viewBox="0 0 9 9"><rect x="0.5" y="0.5" width="8" height="8" fill="#2b292c" stroke="#403e41" stroke-width="1"/><path d="M2 4.5h5" stroke="#555356" stroke-width="1"/><path d="M4.5 2v5" stroke="#555356" stroke-width="1"/></svg>
<svg class="b" style="left:547px;top:415px" width="9" height="9" viewBox="0 0 9 9"><rect x="0.5" y="0.5" width="8" height="8" fill="#2b292c" stroke="#403e41" stroke-width="1"/><path d="M2 4.5h5" stroke="#555356" stroke-width="1"/><path d="M4.5 2v5" stroke="#555356" stroke-width="1"/></svg>
<svg class="b" style="left:547px;top:268px" width="9" height="9" viewBox="0 0 9 9"><path d="M0.5 0.5h8v5l-4 3-4-3z" fill="#2b292c" stroke="#403e41" stroke-width="1"/><path d="M2 3.5h5" stroke="#555356" stroke-width="1"/></svg>
<svg class="b" style="left:547px;top:310px" width="9" height="9" viewBox="0 0 9 9"><path d="M0.5 8.5h8v-5l-4-3-4 3z" fill="#2b292c" stroke="#403e41" stroke-width="1"/><path d="M2 5.5h5" stroke="#555356" stroke-width="1"/></svg>
<div class="b" style="left:1493px;top:159px;width:75px;height:22px;background:#2a282b;box-shadow:0 0 0 1px #3d3b3e inset"></div>
<svg class="b" style="left:1502px;top:164px" width="12" height="11" viewBox="0 0 12 11"><path d="M6 0 L12 11 H0z" fill="#f08d5a"/><path d="M6 3.5v4M6 8.5v1.3" stroke="#2d2b2e" stroke-width="1.4"/></svg>
<div class="t" style="left:1516px;top:165.69px;font-size:11px;color:#a8a8a8;font-weight:normal;font-style:normal;font-family:'Liberation Sans', sans-serif;">1</div>
<svg class="b" style="left:1532px;top:166px" width="9" height="6" viewBox="0 0 9 6"><path d="M0.5 5.5 L4.5 1 L8.5 5.5" stroke="#a8a8a8" stroke-width="1.2" fill="none"/></svg>
<svg class="b" style="left:1553px;top:166px" width="9" height="6" viewBox="0 0 9 6"><path d="M0.5 0.5 L4.5 5 L8.5 0.5" stroke="#a8a8a8" stroke-width="1.2" fill="none"/></svg>
<div class="b" style="left:1556px;top:414px;width:14px;height:2px;background:#4f6c74;"></div>
<div class="b" style="left:1556px;top:435px;width:14px;height:2px;background:#4f6c74;"></div>
<svg class="b" style="left:1575px;top:124px" width="11" height="12" viewBox="0 0 11 12"><ellipse cx="5.5" cy="7.5" rx="3" ry="4" fill="#b8b8b8"/><circle cx="5.5" cy="2.5" r="2" fill="#b8b8b8"/><path d="M0 4l3 2M11 4l-3 2M0 8h3M11 8h-3M0 12l3-2M11 12l-3-2" stroke="#b8b8b8" stroke-width="1"/></svg>
<div class="t" style="left:1575px;top:141px;font-size:11px;line-height:11px;color:#c8c8c8;font-family:'Liberation Sans', sans-serif;writing-mode:vertical-rl">Ant</div>
<div class="t" style="left:1574px;top:177.30px;font-size:15px;color:#b8b8b8;font-weight:bold;font-style:italic;font-family:'Liberation Sans', sans-serif;">m</div>
<div class="t" style="left:1575px;top:193px;font-size:11px;line-height:11px;color:#c8c8c8;font-family:'Liberation Sans', sans-serif;writing-mode:vertical-rl">Maven</div>
<svg class="b" style="left:1575px;top:252px" width="11" height="11" viewBox="0 0 11 11"><rect x="0" y="0" width="11" height="4.5" fill="#b8b8b8"/><rect x="0" y="5.5" width="11" height="4.5" fill="#b8b8b8"/><path d="M7 2.2h2M7 7.7h2" stroke="#2d2b2e" stroke-width="1"/></svg>
<div class="t" style="left:1575px;top:268px;font-size:11px;line-height:11px;color:#c8c8c8;font-family:'Liberation Sans', sans-serif;writing-mode:vertical-rl">Google Cloud Storage</div>
<svg class="b" style="left:1575px;top:404px" width="11" height="11" viewBox="0 0 11 11"><path d="M5.5 0 L8 2.5 L5.5 5 L3 2.5z M2.5 3 L5 5.5 L2.5 8 L0 5.5z M8.5 3 L11 5.5 L8.5 8 L6 5.5z M5.5 6 L8 8.5 L5.5 11 L3 8.5z" fill="#b8b8b8"/></svg>
<div class="t" style="left:1575px;top:420px;font-size:11px;line-height:11px;color:#c8c8c8;font-family:'Liberation Sans', sans-serif;writing-mode:vertical-rl">Kubernetes Explorer</div>
<svg class="b" style="left:1575px;top:543px" width="11" height="12" viewBox="0 0 11 12"><path d="M0 0 L6 6 L0 12 L3 6z M4 0 L10 6 L4 12 L7 6z" fill="#b8b8b8"/></svg>
<div class="t" style="left:1575px;top:559px;font-size:11px;line-height:11px;color:#c8c8c8;font-family:'Liberation Sans', sans-serif;writing-mode:vertical-rl">Cloud Run</div>
<svg class="b" style="left:1575px;top:632px" width="11" height="12" viewBox="0 0 11 12"><ellipse cx="5.5" cy="2" rx="5" ry="1.8" fill="#b8b8b8"/><path d="M0.5 4.5 C2 6.5 9 6.5 10.5 4.5 M0.5 7.5 C2 9.5 9 9.5 10.5 7.5 M0.5 10.5 C2 12.5 9 12.5 10.5 10.5" stroke="#b8b8b8" stroke-width="1.3" fill="none"/></svg>
<div class="t" style="left:1575px;top:648px;font-size:11px;line-height:11px;color:#c8c8c8;font-family:'Liberation Sans', sans-serif;writing-mode:vertical-rl">Database</div>
<svg class="b" style="left:88px;top:1013.5px" width="11" height="11" viewBox="0 0 11 11"><circle cx="5.5" cy="5.5" r="5.5" fill="#b0b0b0"/><path d="M5.5 2.3v4M5.5 7.6v1.3" stroke="#2d2b2e" stroke-width="1.5"/></svg>
<div class="t" style="left:104px;top:1013.77px;font-size:10.9px;color:#d0d0d0;font-weight:normal;font-style:normal;font-family:'Liberation Sans', sans-serif;"><u>6</u>: Problems</div>
<svg class="b" style="left:185px;top:1014px" width="11" height="10" viewBox="0 0 11 10"><rect x="0" y="0" width="11" height="10" fill="#b0b0b0"/><path d="M2 2.5 L4.5 4.5 L2 6.5 M5 8h4" stroke="#2d2b2e" stroke-width="1.1" fill="none"/></svg>
<div class="t" style="left:201.7px;top:1013.94px;font-size:10.7px;color:#d0d0d0;font-weight:normal;font-style:normal;font-family:'Liberation Sans', sans-serif;">Terminal</div>
<svg class="b" style="left:264px;top:1014px" width="10" height="10" viewBox="0 0 10 10"><path d="M0 1.5h2M3.5 1.5h6.5M0 5h2M3.5 5h6.5M0 8.5h2M3.5 8.5h6.5" stroke="#b0b0b0" stroke-width="1.4"/></svg>
<div class="t" style="left:279.7px;top:1014.11px;font-size:10.5px;color:#d0d0d0;font-weight:normal;font-style:normal;font-family:'Liberation Sans', sans-serif;">TODO</div>
<svg class="b" style="left:1494px;top:1013px" width="13" height="13" viewBox="0 0 13 13"><path d="M6.5 0 A6.5 6.5 0 0 0 0 6.5 A6.5 6.5 0 0 0 6.5 13 H13 V6.5 A6.5 6.5 0 0 0 6.5 0z" fill="#4f9a45"/><text x="6.5" y="10" font-size="9" font-weight="bold" text-anchor="middle" fill="#fff" font-family="Liberation Sans">4</text></svg>
<div class="t" style="left:1511.5px;top:1013.77px;font-size:10.9px;color:#d0d0d0;font-weight:normal;font-style:normal;font-family:'Liberation Sans', sans-serif;">Event Log</div>
<svg class="b" style="left:61px;top:1040px" width="15" height="15" viewBox="0 0 15 15"><rect x="3.5" y="1.5" width="10" height="10" stroke="#a8a8a8" stroke-width="1" fill="none"/><path d="M1.5 4v9.5h9.5" stroke="#a8a8a8" stroke-width="1" fill="none"/></svg>
<div class="t" style="left:87.3px;top:1041.69px;font-size:11px;color:#d0d0d0;font-weight:normal;font-style:normal;font-family:'Liberation Sans', sans-serif;">Managed Google Cloud SDK: Managed Google Cloud SDK successfully updated to the latest version. (29 minutes ago)</div>
<div class="t" style="left:1290px;top:1041.69px;font-size:11px;color:#c8c8c8;font-weight:normal;font-style:normal;font-family:'Liberation Sans', sans-serif;">15:12</div>
<div class="t" style="left:1328px;top:1041.69px;font-size:11px;color:#c8c8c8;font-weight:normal;font-style:normal;font-family:'Liberation Sans', sans-serif;">LF</div>
<div class="t" style="left:1352px;top:1041.69px;font-size:11px;color:#c8c8c8;font-weight:normal;font-style:normal;font-family:'Liberation Sans', sans-serif;">UTF-8</div>
<div class="t" style="left:1397px;top:1041.69px;font-size:11px;color:#c8c8c8;font-weight:normal;font-style:normal;font-family:'Liberation Sans', sans-serif;">4 spaces</div>
<svg class="b" style="left:1452px;top:1040px" width="11" height="12" viewBox="0 0 11 12"><path d="M2.5 5.5 V3 A2.5 2.5 0 0 1 7.5 3" stroke="#a0a0a0" stroke-width="1.3" fill="none"/><rect x="3.5" y="5.5" width="7.5" height="6.5" fill="#a0a0a0"/></svg>
<svg class="b" style="left:1475px;top:1039px" width="17" height="15" viewBox="0 0 17 15"><path d="M2 11 A3.5 3.5 0 0 1 3 4 A4.5 4.5 0 0 1 11.5 4.5 A3 3 0 0 1 12 11z" fill="#a0a0a0"/><text x="7.5" y="9" font-size="7" font-weight="bold" text-anchor="middle" fill="#2d2b2e" font-family="Liberation Sans">?</text><circle cx="13" cy="12" r="2.5" fill="#a0a0a0" stroke="#2d2b2e" stroke-width="1"/></svg>
<div class="b" style="left:1496px;top:1039px;width:95px;height:15px;background:#232124;"></div>
<div class="t" style="left:1497.5px;top:1042.77px;font-size:11.5px;color:#ffffff;font-weight:bold;font-style:normal;font-family:'Liberation Sans', sans-serif;">Monokai Pro</div>
<div class="b" style="left:1575px;top:1040px;width:14px;height:14px;border-radius:50%;background:#ffd866"></div>
<svg class="b" style="left:0;top:0" width="1647" height="1139"><path d="M872 427.5 L873.0 425 L875.0 427.5 L877.0 425 L879.0 427.5 L881.0 425 L883.0 427.5 L885.0 425 L887.0 427.5 L889.0 425 L891.0 427.5 L893.0 425 L895.0 427.5 L897.0 425 L899.0 427.5 L901.0 425 L903.0 427.5 L905.0 425 L907.0 427.5 L909.0 425 L911.0 427.5 L913.0 425 L915.0 427.5 L917.0 425 L919.0 427.5 L921.0 425 L923.0 427.5 L925.0 425 L927.0 427.5 L929.0 425 L931.0 427.5 L933.0 425 L935.0 427.5 L937.0 425 L939.0 427.5 L941.0 425 L943.0 427.5 L945.0 425 L947.0 427.5 L949.0 425 L951.0 427.5 L953.0 425 L955.0 427.5 L957.0 425 L959.0 427.5 L961.0 425 L963.0 427.5 L965.0 425 L967.0 427.5 L969.0 425 L971.0 427.5 L973.0 425 L975.0 427.5 " stroke="#7e73c9" stroke-width="0.9" fill="none"/></svg></body></html>
